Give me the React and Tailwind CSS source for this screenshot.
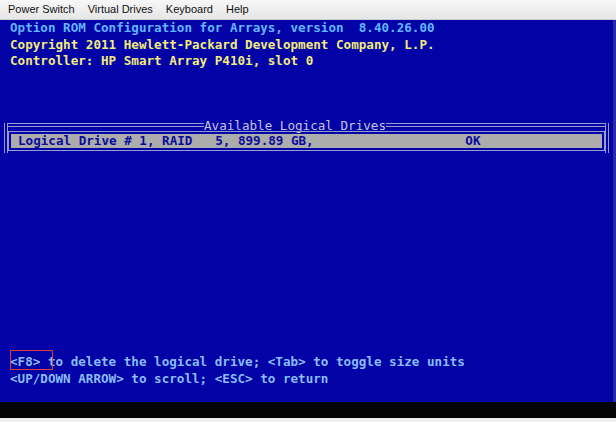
export default function App() {
  const mono = { fontFamily: '"DejaVu Sans Mono", "Liberation Mono", monospace' }

  return (
    <div className="w-[616px] h-[422px] flex flex-col bg-[#f0f0f0] overflow-hidden">
      {/* window menu bar */}
      <div
        className="h-[20px] shrink-0 flex items-center gap-[13px] px-[8px] text-[11px] text-[#111] bg-gradient-to-b from-[#f7f7f7] to-[#e6e6e6] border-b border-[#cfcfcf]"
        style={{ fontFamily: '"Liberation Sans", Arial, sans-serif' }}
      >
        <span>Power Switch</span>
        <span>Virtual Drives</span>
        <span>Keyboard</span>
        <span>Help</span>
      </div>

      {/* console screen */}
      <div
        className="h-[382px] shrink-0 flex flex-col bg-[#0202a6] border-r-[3px] border-[#2a2aa4] font-bold text-[12.6px] whitespace-pre"
        style={mono}
      >
        <div className="pl-[10px] leading-[16.5px]">
          <div className="text-[#62b6ff]">Option ROM Configuration for Arrays, version  8.40.26.00</div>
          <div className="text-[#f2ec7c]">Copyright 2011 Hewlett-Packard Development Company, L.P.</div>
          <div className="text-[#f2ec7c]">Controller: HP Smart Array P410i, slot 0</div>
        </div>

        {/* logical drives box */}
        <div className="mt-[53px] ml-[4px] w-[605px] h-[30px] border-x-4 border-double border-[#9a9ad2] flex flex-col">
          <div className="h-[4px] flex items-start">
            <div className="w-[196px] h-[4px] border-y border-[#9a9ad2]" />
            <span className="-mt-[1px] h-[7px] leading-[8px] text-[#c4c4dc] font-normal">Available Logical Drives</span>
            <div className="flex-1 h-[4px] border-y border-[#9a9ad2]" />
          </div>
          <div className="mt-[4px] border border-[#9a9ad2] p-[2px]">
            <div className="h-[14px] leading-[14px] pl-[7px] bg-[#acacac] text-[#0a0a9c]">
              Logical Drive # 1, RAID   5, 899.89 GB,                    OK
            </div>
          </div>
        </div>

        {/* key help */}
        <div className="mt-auto pb-[15px] pl-[10px] leading-[16.5px] text-[#88bdf6]">
          <div className="relative">
            <span className="absolute left-0 top-[-4px] w-[43px] h-[20px] border border-[#e23a3a]" />
            &lt;F8&gt; to delete the logical drive; &lt;Tab&gt; to toggle size units
          </div>
          <div>&lt;UP/DOWN ARROW&gt; to scroll; &lt;ESC&gt; to return</div>
        </div>
      </div>

      <div className="h-[16px] shrink-0 bg-[#050505]" />
      <div className="flex-1 bg-[#efefef]" />
    </div>
  )
}
